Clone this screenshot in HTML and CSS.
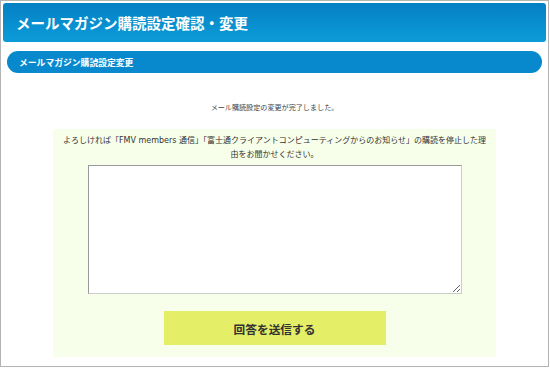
FILE: index.html
```html
<!DOCTYPE html>
<html lang="ja">
<head>
  <meta charset="UTF-8">
  <meta name="viewport" content="width=device-width, initial-scale=1.0">
  <title>メールマガジン購読設定確認・変更</title>
  <link rel="stylesheet" href="styles.css">
</head>
<body>
  <div class="page">
    <h1 class="page-title">メールマガジン購読設定確認・変更</h1>
    <h2 class="section-title">メールマガジン購読設定変更</h2>

    <p class="notice">メール購読設定の変更が完了しました。</p>

    <form class="survey">
      <p class="survey-text">よろしければ「FMV members 通信」「富士通クライアントコンピューティングからのお知らせ」の購読を停止した理<br>由をお聞かせください。</p>
      <textarea class="survey-input" name="reason"></textarea>
      <button type="button" class="submit-button">回答を送信する</button>
    </form>
  </div>
</body>
</html>
```

FILE: styles.css
```css
body {
  margin: 0;
  font-family: "DejaVu Sans", "Noto Sans CJK JP", sans-serif;
  color: #333;
}

.page {
  box-sizing: border-box;
  width: 549px;
  height: 367px;
  border: 1px solid #b4b4b4;
  padding: 2px;
  background: #fff;
}

.page-title {
  margin: 0;
  height: 39px;
  display: flex;
  align-items: center;
  padding-left: 13px;
  border-radius: 3px;
  background: linear-gradient(to bottom, #0480c4, #0c9cd8);
  color: #fff;
  font-size: 14.5px;
  font-weight: bold;
}

.section-title {
  margin: 9px 4px 0;
  height: 22px;
  display: flex;
  align-items: center;
  padding-left: 12px;
  border-radius: 11px;
  background: #0889cd;
  color: #fff;
  font-size: 8.8px;
  font-weight: bold;
}

.notice {
  margin: 30px 0 0;
  text-align: center;
  font-size: 7.1px;
  line-height: 10px;
  color: #444;
}

.survey {
  margin: 16px 50px 0;
  padding: 5px 2px 12px;
  background: #f7ffeb;
  display: flex;
  flex-direction: column;
  align-items: center;
}

.survey-text {
  margin: 0;
  text-align: center;
  font-size: 8px;
  line-height: 14px;
  white-space: nowrap;
}

.survey-input {
  box-sizing: border-box;
  width: 374px;
  height: 129px;
  margin-top: 3px;
  border: 1px solid #999;
  border-right-color: #ccc;
  border-bottom-color: #ccc;
  resize: both;
}

.submit-button {
  margin-top: 17px;
  width: 222px;
  height: 34px;
  border: none;
  background: #e4ee66;
  color: #333;
  font-family: "Noto Sans CJK JP", sans-serif;
  font-size: 11.7px;
  font-weight: bold;
  cursor: pointer;
}
```
